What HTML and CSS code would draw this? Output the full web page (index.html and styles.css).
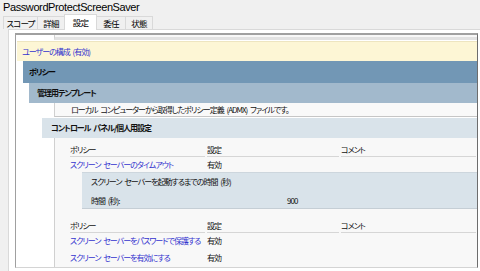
FILE: index.html
```html
<!DOCTYPE html>
<html lang="ja">
<head>
<meta charset="utf-8">
<link rel="stylesheet" href="styles.css">
</head>
<body>
<div class="title">PasswordProtectScreenSaver</div>
<div class="tabs">
  <div class="tab w1">スコープ</div>
  <div class="tab w2">詳細</div>
  <div class="tab w3 active">設定</div>
  <div class="tab w4">委任</div>
  <div class="tab w5">状態</div>
</div>
<div class="page">
  <div class="view">
    <div class="frag"></div>
    <div class="user">ユーザーの構成 (有効)</div>
    <div class="h1">ポリシー</div>
    <div class="h2">管理用テンプレート</div>
    <div class="desc">ローカル コンピューターから取得したポリシー定義 (ADMX) ファイルです。</div>
    <div class="h3">コントロール パネル/個人用設定</div>
    <div class="body">
      <div class="grid head"><span>ポリシー</span><span>設定</span><span>コメント</span></div>
      <div class="grid row"><span class="link">スクリーン セーバーのタイムアウト</span><span>有効</span><span></span></div>
      <div class="sub">
        <div class="subline">スクリーン セーバーを起動するまでの時間 (秒)</div>
        <div class="subgrid"><span>時間 (秒):</span><span>900</span></div>
      </div>
      <div class="grid head t2"><span>ポリシー</span><span>設定</span><span>コメント</span></div>
      <div class="grid row r2"><span class="link">スクリーン セーバーをパスワードで保護する</span><span>有効</span><span></span></div>
      <div class="grid row r2"><span class="link">スクリーン セーバーを有効にする</span><span>有効</span><span></span></div>
    </div>
  </div>
</div>
</body>
</html>
```
FILE: styles.css
```css
html, body {
  margin: 0;
  padding: 0;
  background: #f0f0f0;
  height: 271px;
  overflow: hidden;
}
body {
  font-family: "Noto Sans CJK JP", "Noto Sans", sans-serif;
  font-size: 8px;
  font-feature-settings: "palt";
  letter-spacing: -1px;
  word-spacing: 2px;
  color: #111;
  display: flex;
  flex-direction: column;
  white-space: nowrap;
}
.title {
  font-family: "Liberation Sans", Arial, sans-serif;
  font-size: 11px;
  letter-spacing: -0.4px;
  word-spacing: 0;
  line-height: 14px;
  height: 14px;
  padding-left: 3px;
  color: #000;
  font-feature-settings: normal;
}
.tabs {
  display: flex;
  align-items: flex-end;
  height: 15px;
  padding-left: 3px;
}
.tab {
  box-sizing: border-box;
  height: 13px;
  border: 1px solid #d9d9d9;
  border-bottom: none;
  margin-right: -1px;
  background: #f0f0f0;
  text-align: center;
  line-height: 12px;
  font-size: 8.5px;
  letter-spacing: -0.8px;
  color: #000;
}
.tab.active {
  height: 16px;
  background: #fff;
  position: relative;
  top: 1px;
  line-height: 14px;
  z-index: 1;
}
.w1 { width: 35px; }
.w2 { width: 28px; }
.w3 { width: 33px; }
.w4 { width: 30px; }
.w5 { width: 28px; }
.page {
  flex: 1;
  margin-left: 8px;
  border-top: 1px solid #d9d9d9;
  border-left: 1px solid #d9d9d9;
  background: #fff;
  padding: 3px 2px 0 6px;
  display: flex;
  flex-direction: column;
}
.view {
  box-sizing: border-box;
  height: 235px;
  border-top: 2px solid #a0a0a0;
  border-left: 1px solid #a0a0a0;
  border-right: 1px solid #6d6d6d;
  border-bottom: 1px solid #d4d4d4;
  background: #fff;
  overflow: hidden;
}
.frag {
  margin-left: 38px;
  height: 2px;
  background: #f8f8f8;
  border-left: 1px solid #d0d0d0;
  border-bottom: 3px solid #e2e2e2;
  margin-bottom: 1px;
}
.user {
  margin-left: 1px;
  height: 19px;
  line-height: 19px;
  border-top: 1px solid #eee5c0;
  background: #fdf6d5;
  padding-left: 5px;
  color: #3434cf;
}
.h1 {
  margin-left: 7px;
  height: 22px;
  line-height: 22px;
  background: #7297b5;
  padding-left: 6px;
  font-weight: bold;
  color: #0a0a0a;
}
.h2 {
  margin-left: 13px;
  height: 20px;
  line-height: 20px;
  background: #a2b9cc;
  padding-left: 8px;
  font-weight: bold;
  color: #111;
}
.desc {
  margin-left: 38px;
  height: 13px;
  line-height: 13px;
  background: #f9f9f9;
  border-left: 1px solid #d0d0d0;
  border-bottom: 1px solid #c6c6c6;
  padding-left: 16px;
  margin-bottom: 1px;
}
.h3 {
  margin-left: 26px;
  height: 20px;
  line-height: 20px;
  background: #d9e3ea;
  padding-left: 9px;
  font-weight: bold;
  color: #111;
}
.body {
  flex: 1;
  margin-left: 38px;
  border-left: 1px solid #d0d0d0;
  background: #f8f8f8;
  padding: 5px 1px 20px 15px;
}
.grid {
  display: grid;
  grid-template-columns: 135px 132px 1fr;
  column-gap: 2px;
}
.grid span {
  overflow: hidden;
}
.head span {
  height: 13px;
  line-height: 14px;
  border-bottom: 1px solid #d6d6d6;
}
.row span {
  height: 15px;
  line-height: 16px;
}
.r2 span {
  height: 17px;
  line-height: 16px;
}
.link {
  color: #3434cf;
}
.sub {
  margin-left: 12px;
  margin-right: -1px;
  background: #d9e3ea;
  border-top: 1px solid #cdd6dd;
  border-bottom: 1px solid #c5ced5;
  padding: 2px 0 0 9px;
}
.subline {
  height: 14px;
  line-height: 14px;
  margin-bottom: 5px;
}
.subgrid {
  display: grid;
  grid-template-columns: 196px 1fr;
  height: 14px;
  line-height: 14px;
}
.t2 {
  margin-top: 10px;
}
```
